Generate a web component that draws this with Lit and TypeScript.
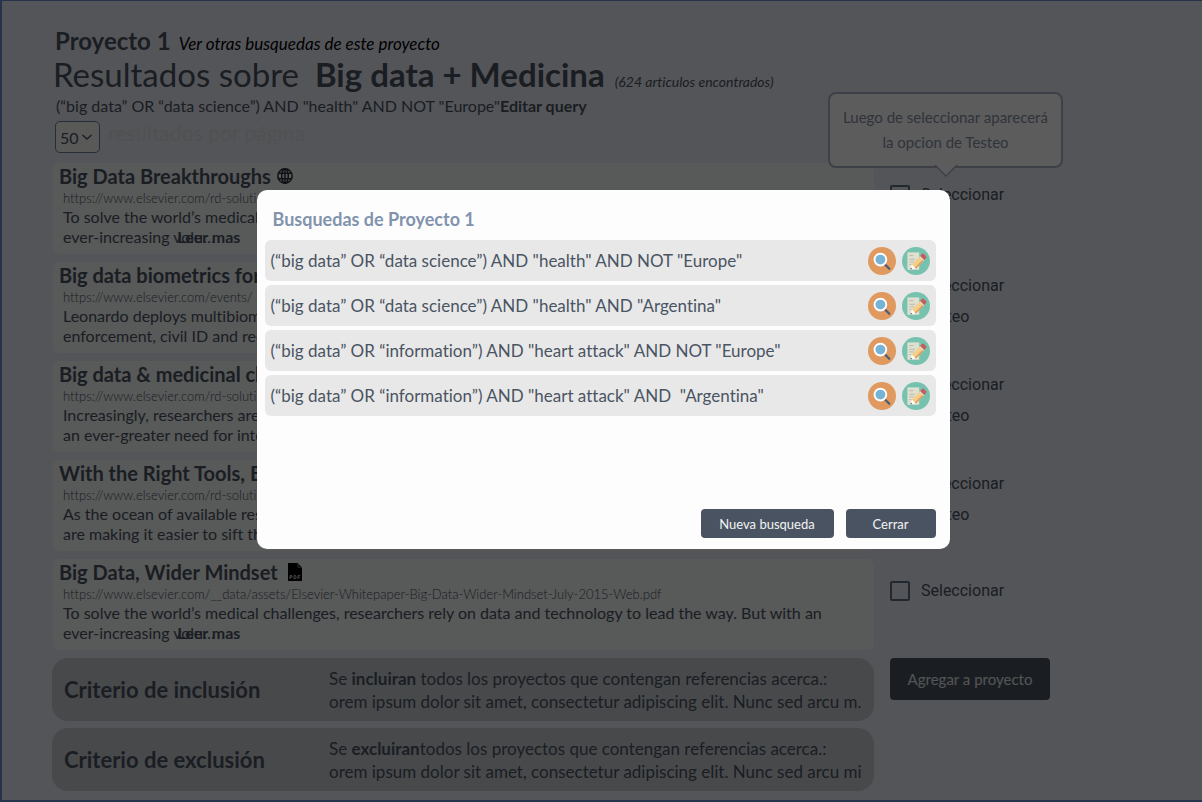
import { LitElement, html, css, svg, nothing } from "lit";
import { customElement, property } from "lit/decorators.js";

type Kind = "web" | "pdf" | "";

interface Result {
  id: string;
  title: string;
  kind: Kind;
  url: string;
  first: string;
  second: string;
  tail?: string;
  testeo: boolean;
}

const RESULTS: Result[] = [
  { id: "r1", title: "Big Data Breakthroughs", kind: "web", url: "https://www.elsevier.com/rd-solutions", first: "To solve the world’s medical", second: "ever-increasing ", tail: "volu…", testeo: false },
  { id: "r2", title: "Big data biometrics for", kind: "", url: "https://www.elsevier.com/events/", first: "Leonardo deploys multibiometrics", second: "enforcement, civil ID and record", testeo: true },
  { id: "r3", title: "Big data & medicinal chemistry", kind: "", url: "https://www.elsevier.com/rd-solutions", first: "Increasingly, researchers are", second: "an ever-greater need for interdisciplinary", testeo: true },
  { id: "r4", title: "With the Right Tools, Big Data Boosts", kind: "", url: "https://www.elsevier.com/rd-solutions", first: "As the ocean of available research", second: "are making it easier to sift through data", testeo: true },
  { id: "r5", title: "Big Data, Wider Mindset", kind: "pdf", url: "https://www.elsevier.com/__data/assets/Elsevier-Whitepaper-Big-Data-Wider-Mindset-July-2015-Web.pdf", first: "To solve the world’s medical challenges, researchers rely on data and technology to lead the way. But with an", second: "ever-increasing ", tail: "volu…", testeo: false },
];

const SEARCHES = [
  "(“big data” OR “data science”) AND \"health\" AND NOT \"Europe\"",
  "(“big data” OR “data science”) AND \"health\" AND \"Argentina\"",
  "(“big data” OR “information”) AND \"heart attack\" AND NOT \"Europe\"",
  "(“big data” OR “information”) AND \"heart attack\" AND \u00a0\"Argentina\"",
];

const globe = html`<svg class="globe" viewBox="0 0 16 16" aria-hidden="true">${svg`
  <g fill="none" stroke="currentColor" stroke-width="1.5">
    <circle cx="8" cy="8" r="7.2"/><ellipse cx="8" cy="8" rx="3.3" ry="7.2"/>
    <path d="M8 .8v14.400M1.500 5.300h13M1.500 10.700h13"/>
  </g>`}</svg>`;

const pdf = html`<svg class="pdf" viewBox="0 0 14 18" aria-hidden="true">${svg`
  <path fill="#000" d="M0 0h9.5L14 4.5V18H0z"/>
  <path d="M10 .5v3.7h3.6" fill="none" stroke="#9a9a9a" stroke-width=".8"/>
  <g fill="none" stroke="#d8d8d8" stroke-width=".9">
    <path d="M2 16v-3.4h1.8v1.8H2M6 12.6v3.1h1.2l.8-.6v-1.9l-.8-.6zM10 16v-3.4h2.2M10 14.3h1.8"/>
  </g>`}</svg>`;

const searchIcon = html`<svg viewBox="0 0 28 28" aria-hidden="true">${svg`
  <circle cx="14" cy="14" r="14" fill="#e0995e"/>
  <path d="M16.5 17l4.8 4.8" stroke="#4f5d73" stroke-width="2.2" stroke-linecap="round"/>
  <circle cx="12.4" cy="12.6" r="5.9" fill="#77b3d4" stroke="#fff" stroke-width="1.9"/>`}</svg>`;

const editIcon = html`<svg viewBox="0 0 28 28" aria-hidden="true">${svg`
  <circle cx="14" cy="14" r="14" fill="#76c2af"/>
  <path d="M5.400 5.400h11.800v17.400H5.400z" fill="#e0e0d1"/>
  <path d="M7.400 8.600h4M7.400 12.300h5.500M7.400 14.900h4.400M7.400 17.600h2" stroke="#b9baab" stroke-width="1"/>
  <path d="M8.400 22.400l1.500-5 4 3.900z" fill="#fff"/>
  <path d="M8.400 22.400l.5-1.800 1.400 1.300z" fill="#4f5d73"/>
  <path d="M9.900 17.600l8-8.200 4 4-8 8.100z" fill="#f5cf87"/>
  <path d="M12.900 20.500l8-8.100 1 1-8 8.100z" fill="#e0995e"/>
  <path d="M17.400 9.900l1-1 4 4-1 1z" fill="#e0e0d1"/>
  <path d="M18.200 9l1.800-2.100c.6-.6 1.200-.6 1.800 0l2.200 2.200c.6.6.6 1.200 0 1.800L22.200 13z" fill="#c75c5c"/>`}</svg>`;

@customElement("result-card")
export class ResultCard extends LitElement {
  @property({ attribute: false }) item!: Result;

  static styles = css`
    :host { display: block; background: #f4f5f5; border-radius: 6px; height: 91px; min-width: 0; overflow: hidden; color: #4a5463; white-space: nowrap; }
    .title { margin: 0; padding: 0 6px; height: 26px; line-height: 26px; font-size: 20px; font-weight: 700; display: flex; align-items: center; gap: 6px; }
    .url { display: block; padding: 0 10px; font-size: 13px; line-height: 18px; font-weight: 300; color: inherit; text-decoration: none; }
    .text { margin: 0; padding: 0 10px; font-size: 16px; line-height: 20px; }
    .tail { position: relative; }
    .more { position: absolute; left: 4px; top: 0; font-weight: 700; color: inherit; text-decoration: none; }
    .globe { width: 16px; height: 16px; color: #2b3038; }
    .pdf { width: 14px; height: 18px; margin-left: 4px; }
  `;

  render() {
    const r = this.item;
    return html`
      <h2 class="title">${r.title}${r.kind === "web" ? globe : r.kind === "pdf" ? pdf : nothing}</h2>
      <a class="url" href="#${r.id}">${r.url}</a>
      <p class="text">${r.first}<br />${r.second}${r.tail
        ? html`<span class="tail">${r.tail}<a class="more" href="#${r.id}">Leer mas</a></span>`
        : nothing}</p>
    `;
  }
}

@customElement("search-dialog")
export class SearchDialog extends LitElement {
  static styles = css`
    :host { display: flex; justify-content: center; align-items: flex-start; position: absolute; inset: 0; padding: 189px 0 0 2px; background: rgba(0, 0, 0, 0.64); }
    .dialog { box-sizing: border-box; width: 693px; max-width: 94%; min-height: 359px; padding: 16px 14px 11px 8px; border-radius: 10px; background: #fdfdfd; display: flex; flex-direction: column; }
    .heading { margin: 0 8px 7px; font-size: 18px; line-height: 27px; font-weight: 700; color: #8293ad; }
    .list { list-style: none; margin: 0; padding: 0; display: grid; gap: 4px; }
    .row { display: flex; align-items: center; gap: 6px; height: 41px; padding: 0 6px; border-radius: 6px; background: #e8e8e8; color: #4a5463; font-size: 17px; }
    .query { flex: 1; }
    .icon { width: 28px; height: 28px; padding: 0; border: 0; background: none; border-radius: 50%; }
    .icon svg { display: block; width: 28px; height: 28px; }
    .actions { margin-top: auto; display: flex; justify-content: flex-end; gap: 12px; }
    .btn { height: 29px; padding: 0; border: 0; border-radius: 4px; background: #4a5361; color: #f2f3f4; font: 400 13px Lato, sans-serif; width: 90px; }
    .btn.wide { width: 133px; }
  `;

  render() {
    return html`
      <section class="dialog" role="dialog" aria-modal="true" aria-labelledby="dialog-title">
        <h2 class="heading" id="dialog-title">Busquedas de Proyecto 1</h2>
        <ul class="list">
          ${SEARCHES.map((q) => html`
            <li class="row">
              <span class="query">${q}</span>
              <button class="icon" type="button" aria-label="Buscar">${searchIcon}</button>
              <button class="icon" type="button" aria-label="Editar">${editIcon}</button>
            </li>`)}
        </ul>
        <div class="actions">
          <button class="btn wide" type="button">Nueva busqueda</button>
          <button class="btn" type="button">Cerrar</button>
        </div>
      </section>
    `;
  }
}

@customElement("app-root")
export class AppRoot extends LitElement {
  static styles = css`
    :host { display: block; position: relative; box-sizing: border-box; min-height: 100vh; font-family: Lato, sans-serif; font-variant-ligatures: none; color: #4a5463; background: #e9ebf5; border: solid #25344a; border-width: 1px 0 2px 2px; }
    .page { padding: 26px 139px 8px 51px; }
    .project { display: flex; align-items: baseline; gap: 8px; margin: 0 2px; line-height: 28px; }
    .name { margin: 0; font-size: 24px; font-weight: 700; }
    .others { font-size: 17px; line-height: 20px; font-style: italic; color: #000; text-decoration: none; }
    .heading { margin: 0 0 2px; font-size: 33px; line-height: 38px; font-weight: 400; display: flex; align-items: baseline; gap: 16px; }
    .count { margin-left: -6px; font-size: 14px; line-height: 20px; font-style: italic; }
    .querybar { margin: 0 3px; font-size: 16px; line-height: 22px; }
    .edit { font-weight: 700; color: inherit; text-decoration: none; }
    .pager { display: flex; align-items: center; gap: 8px; margin: 4px 2px 10px; height: 32px; font-size: 21px; line-height: 24px; color: #e0e1e4; }
    .pager label { align-self: flex-start; }
    .selectbox { position: relative; display: flex; align-items: center; color: #4a5463; }
    .size { appearance: none; box-sizing: border-box; width: 45px; height: 32px; margin: 0; padding: 0 4px; border: 1px solid #6a7c96; border-radius: 5px; background: #f5f5f4; color: inherit; font: 400 16px Lato, sans-serif; }
    .chevron { position: absolute; right: 7px; width: 12px; height: 8px; pointer-events: none; }
    .rows { display: grid; gap: 8px; margin-bottom: 8px; }
    .line { display: grid; grid-template-columns: minmax(0, 1fr) 173px; gap: 16px; }
    .side { position: relative; display: flex; flex-direction: column; gap: 11px; padding-top: 22px; font: 400 16px/20px Roboto, sans-serif; }
    .side.double { padding-top: 14px; }
    .check { display: flex; align-items: center; gap: 11px; }
    .box { appearance: none; box-sizing: border-box; width: 20px; height: 20px; margin: 0; border: 2px solid #5c7085; border-radius: 2px; }
    .tip { position: absolute; left: -62px; bottom: 86px; box-sizing: border-box; width: 235px; padding: 11px 10px; border: 2px solid #aab4c4; border-radius: 8px; background: #fff; color: #8590a2; font: 400 15px/25px Lato, sans-serif; text-align: center; }
    .tip svg { position: absolute; left: 104px; top: 100%; width: 24px; height: 12px; margin-top: -1px; }
    .criteria { display: grid; gap: 7px; }
    .panel { box-sizing: border-box; height: 63px; margin-left: -1px; padding: 0 0 0 12px; border-radius: 16px; background: #c8cad1; display: grid; grid-template-columns: 265px minmax(0, 1fr); align-items: center; }
    .panel h2 { margin: 0; font-size: 22px; font-weight: 700; }
    .panel p { margin: 0; font-size: 17px; line-height: 23px; white-space: nowrap; }
    .add { align-self: start; width: 160px; height: 42px; border: 0; border-radius: 4px; padding: 0; background: #4a5463; color: #e6e8ea; font: 400 15px Lato, sans-serif; }
  `;

  private check(id: string, label: string) {
    return html`<label class="check" for=${id}><input class="box" type="checkbox" id=${id} />${label}</label>`;
  }

  render() {
    return html`
      <main class="page">
        <header>
          <div class="project">
            <p class="name">Proyecto 1</p>
            <a class="others" href="#busquedas">Ver otras busquedas de este proyecto</a>
          </div>
          <h1 class="heading">Resultados sobre <strong>Big data + Medicina</strong> <span class="count">(624 articulos encontrados)</span></h1>
          <p class="querybar">(“big data” OR “data science”) AND "health" AND NOT "Europe"<a class="edit" href="#query">Editar query</a></p>
          <div class="pager">
            <span class="selectbox">
              <select class="size" id="size"><option>50</option></select>
              <svg class="chevron" viewBox="0 0 12 8" aria-hidden="true"><path d="M1.5 2 6 6l4.500-4" fill="none" stroke="currentColor" stroke-width="1.500"/></svg>
            </span>
            <label for="size">resultados por página</label>
          </div>
        </header>
        <div class="rows">
          ${RESULTS.map((r, i) => html`
            <div class="line">
              <result-card .item=${r}></result-card>
              <div class="side ${r.testeo ? "double" : ""}">
                ${this.check(`${r.id}-sel`, "Seleccionar")}
                ${r.testeo ? this.check(`${r.id}-test`, "Testeo") : nothing}
                ${i === 0 ? html`
                  <div class="tip" role="tooltip">Luego de seleccionar aparecerá la opcion de Testeo
                    <svg viewBox="0 0 24 12" aria-hidden="true"><path d="M1 0 12 11 23 0" fill="#fff" stroke="#aab4c4" stroke-width="1.500"/></svg>
                  </div>` : nothing}
              </div>
            </div>`)}
        </div>
        <div class="line">
          <div class="criteria">
            <section class="panel">
              <h2>Criterio de inclusión</h2>
              <p>Se <b>incluiran</b> todos los proyectos que contengan referencias acerca.:<br />orem ipsum dolor sit amet, consectetur adipiscing elit. Nunc sed arcu m.</p>
            </section>
            <section class="panel">
              <h2>Criterio de exclusión</h2>
              <p>Se <b>excluiran</b>todos los proyectos que contengan referencias acerca.:<br />orem ipsum dolor sit amet, consectetur adipiscing elit. Nunc sed arcu mi</p>
            </section>
          </div>
          <button class="add" type="button">Agregar a proyecto</button>
        </div>
      </main>
      <search-dialog></search-dialog>
    `;
  }
}
